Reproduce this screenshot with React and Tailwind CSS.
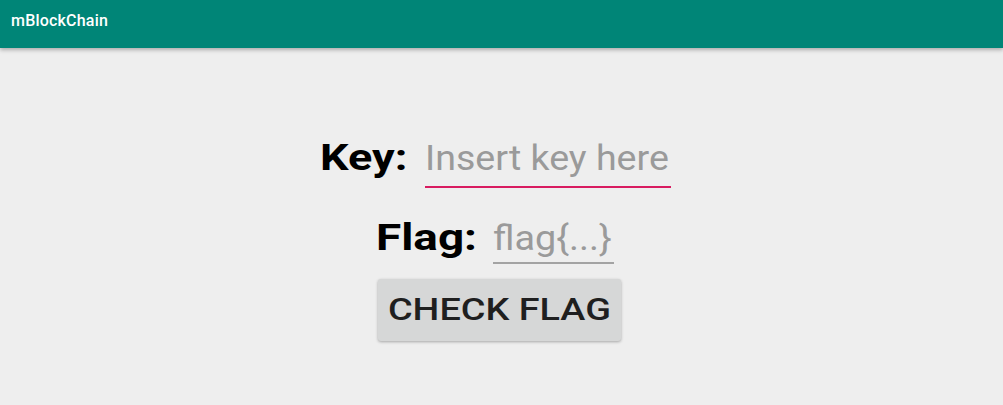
export default function App() {
  return (
    <div className="w-[1003px] h-[405px] bg-[#eeeeee] flex flex-col overflow-hidden" style={{ fontFamily: "Roboto, 'Noto Sans', sans-serif" }}>
      <div className="h-[48px] shrink-0 bg-[#008577] flex items-start pt-[13px] px-[11px] shadow-[0_2px_4px_rgba(0,0,0,0.28)] relative z-10">
        <span className="text-white text-[16px] leading-none font-medium tracking-[0.2px]">mBlockChain</span>
      </div>
      <div className="flex-1 flex flex-col items-center pt-[92px]">
        <div className="flex items-baseline gap-[16px] pr-[12px]">
          <span className="inline-block w-[89px] text-[36px] font-bold text-black leading-none whitespace-nowrap">
            <span className="inline-block origin-left scale-x-[1.25]">Key:</span>
          </span>
          <div className="inline-block w-[246px] border-b-2 border-[#d81b60] pb-[9px]">
            <span className="inline-block origin-left scale-x-[1.073] text-[35px] text-[#9a9a9a] leading-none whitespace-nowrap">Insert key here</span>
          </div>
        </div>
        <div className="flex items-baseline gap-[17px] pr-[13px] mt-[31px]">
          <span className="inline-block w-[100px] text-[37px] font-bold text-black leading-none whitespace-nowrap">
            <span className="inline-block origin-left scale-x-[1.24]">Flag:</span>
          </span>
          <div className="inline-block w-[121px] border-b-2 border-[#a3a3a3] pb-[5px]">
            <span className="inline-block origin-left scale-x-[1.08] text-[35px] text-[#9a9a9a] leading-none whitespace-nowrap">flag{'{...}'}</span>
          </div>
        </div>
        <button className="mt-[15px] mr-[4px] w-[243px] h-[62px] bg-[#d6d7d7] rounded-[3px] shadow-[0_1px_3px_rgba(0,0,0,0.3)] flex items-center justify-center pb-[2px]">
          <span className="inline-block scale-x-[1.22] text-[31px] leading-none font-medium text-[#1f1f1f] whitespace-nowrap">CHECK FLAG</span>
        </button>
      </div>
    </div>
  );
}
